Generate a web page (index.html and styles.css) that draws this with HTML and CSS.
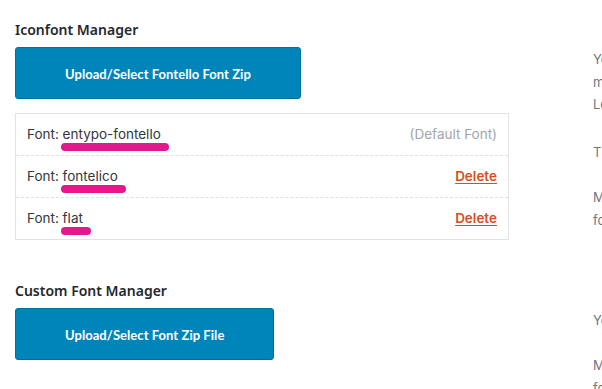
FILE: index.html
```html
<!DOCTYPE html>
<html>
<head>
<meta charset="utf-8">
<title>Iconfont Manager</title>
<link rel="stylesheet" href="styles.css">
</head>
<body>
<div class="page">
  <section class="section">
    <div class="main">
      <h2 class="section-title">Iconfont Manager</h2>
      <button class="btn" type="button">Upload/Select Fontello Font Zip</button>
      <div class="font-list">
        <div class="font-row">
          <span class="font-label">Font: <span class="font-name">entypo-fontello</span></span>
          <span class="font-default">(Default Font)</span>
        </div>
        <div class="font-row">
          <span class="font-label">Font: <span class="font-name">fontelico</span></span>
          <a class="font-delete" href="#">Delete</a>
        </div>
        <div class="font-row">
          <span class="font-label">Font: <span class="font-name">flat</span></span>
          <a class="font-delete" href="#">Delete</a>
        </div>
      </div>
    </div>
    <aside class="help">
      <p>You can upload additional Iconfonts that were generated with<br>multiple icons and font files. Make sure to upload the zip file.<br>Learn more about iconfonts</p>
      <p class="help-gap">The default font can't be deleted.</p>
      <p>Make sure to only use fonts with a license that allows usage<br>for commercial projects.</p>
    </aside>
  </section>
  <section class="section section--second">
    <div class="main">
      <h2 class="section-title">Custom Font Manager</h2>
      <button class="btn" type="button">Upload/Select Font Zip File</button>
    </div>
    <aside class="help">
      <p>You can upload custom fonts in a zip file.</p>
      <p>Make sure that the zip contains the font files in all required<br>formats (ttf, woff, woff2).</p>
    </aside>
  </section>
</div>
</body>
</html>
```
FILE: styles.css
```css
html, body {
  margin: 0;
  padding: 0;
  background: #fff;
  overflow: hidden;
}

.page {
  padding: 20px 0 0 15px;
  font-family: Inter, "Noto Sans", sans-serif;
  color: #32373c;
}

.section {
  display: grid;
  grid-template-columns: 494px auto;
  column-gap: 84px;
  align-items: start;
}

.section--second {
  margin-top: 41px;
}

.main {
  display: flex;
  flex-direction: column;
  align-items: flex-start;
}

.section-title {
  margin: 0;
  font-family: "Noto Sans", sans-serif;
  font-size: 14px;
  font-weight: 600;
  line-height: 20px;
  color: #23282d;
}

.btn {
  margin-top: 7px;
  height: 52px;
  padding: 1px 49px 0;
  box-sizing: border-box;
  border: 1px solid #006fa0;
  border-radius: 3px;
  background: #0085ba;
  color: #fff;
  font-family: Lato, sans-serif;
  font-size: 13px;
  font-weight: 700;
  letter-spacing: 0.05px;
  cursor: pointer;
}

.font-list {
  align-self: stretch;
  margin-top: 14px;
  border: 1px solid #e3e3e3;
  background: #fff;
}

.font-row {
  display: flex;
  justify-content: space-between;
  align-items: center;
  height: 41px;
  padding: 0 11px;
  font-size: 13.5px;
  line-height: 41px;
}

.font-row + .font-row {
  border-top: 1px dashed #e0e0e0;
}

.font-name {
  position: relative;
}

.font-name::after {
  content: "";
  position: absolute;
  left: -2px;
  right: -8px;
  top: calc(100% + 1px);
  height: 8px;
  border-radius: 4px;
  background: #e5178c;
}

.font-default {
  color: #a0a5aa;
}

.font-delete {
  color: #d54e21;
  font-weight: 600;
  text-decoration: underline;
  text-underline-offset: 2px;
}

.help {
  padding-top: 28px;
  font-size: 13px;
  line-height: 22.5px;
  color: #72777c;
  white-space: nowrap;
}

.help p {
  margin: 0 0 22.5px;
}

.help p:last-child {
  margin-bottom: 0;
}

.help .help-gap {
  margin-top: 25.5px;
}
```
